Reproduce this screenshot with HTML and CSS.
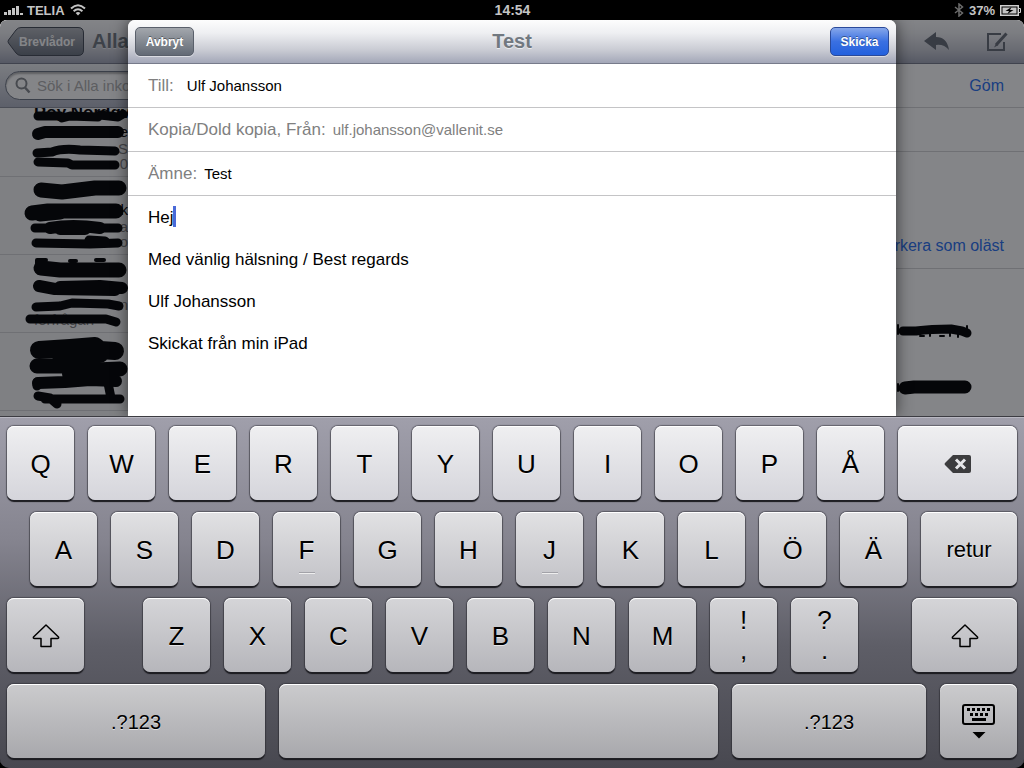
FILE: index.html
```html
<!DOCTYPE html>
<html lang="sv">
<head>
  <meta charset="UTF-8">
  <title>Test</title>
  <link rel="stylesheet" href="styles.css">
</head>
<body>

  <header class="status-bar">
    <div class="status-side">
      <svg width="20" height="10" viewBox="0 0 20 10" fill="#c4c4c4" aria-hidden="true">
        <rect x="0" y="7" width="3" height="3"/>
        <rect x="4" y="5" width="3" height="5"/>
        <rect x="8" y="3" width="3" height="7"/>
        <rect x="12" y="1" width="3" height="9"/>
        <rect x="16" y="8" width="3" height="2"/>
      </svg>
      <span>TELIA</span>
      <svg class="wifi" width="16" height="12" viewBox="0 0 16 12" fill="none" stroke="#c4c4c4" stroke-width="2" aria-hidden="true">
        <path d="M1 4.500Q8 -2 15 4.500"/>
        <path d="M3.600 7.200Q8 3.200 12.400 7.200"/>
        <path d="M8 11.500L5.600 9Q8 7.200 10.400 9Z" fill="#c4c4c4" stroke="none"/>
      </svg>
    </div>
    <time class="clock">14:54</time>
    <div class="status-side status-right">
      <svg width="10" height="14" viewBox="0 0 10 14" fill="none" stroke="#6c6c6c" stroke-width="1.500" aria-hidden="true">
        <path d="M1 4L8.500 10L5 13V1L8.500 4L1 10"/>
      </svg>
      <span>37%</span>
      <svg width="21" height="11" viewBox="0 0 21 11" aria-hidden="true">
        <rect x=".75" y=".75" width="17.500" height="9.500" fill="none" stroke="#d0d0d0" stroke-width="1.500"/>
        <rect x="2.500" y="2.500" width="14" height="6" fill="#c4c4c4"/>
        <path d="M19 3.500H20.500V7.500H19" fill="none" stroke="#d0d0d0"/>
        <path d="M11.500 2L5.500 6H9L7.500 9L13.500 5H10Z" fill="#000"/>
      </svg>
    </div>
  </header>

  <main class="stage">

    <div class="mail">
      <section class="sidebar">
        <div class="toolbar">
          <button class="back" type="button">
            <svg width="77" height="30" viewBox="0 0 77 30" aria-hidden="true">
              <defs>
                <linearGradient id="back-fill" x1="0" y1="0" x2="0" y2="1">
                  <stop offset="0" stop-color="#b3b6bc"/>
                  <stop offset="1" stop-color="#6c737f"/>
                </linearGradient>
              </defs>
              <path d="M14 .5H71Q76.500 .5 76.500 6V23Q76.500 28.500 71 28.500H14Q11 28.500 9 26L1.500 16Q.5 14.500 1.500 13L9 3Q11 .5 14 .5Z" fill="url(#back-fill)" stroke="#454b57"/>
            </svg>
            <span>Brevlådor</span>
          </button>
          <h2 class="title">Alla</h2>
        </div>
        <div class="search-bar">
          <label class="search">
            <svg width="16" height="17" viewBox="0 0 16 17" fill="none" stroke="#85888d" stroke-width="2" aria-hidden="true">
              <circle cx="6.500" cy="6.500" r="5"/>
              <path d="M10 10.500L14.500 15.500" stroke-width="2.500"/>
            </svg>
            <input type="search" placeholder="Sök i Alla inkorgar" aria-label="Sök">
          </label>
        </div>
        <div class="list">
          <ul>
            <li><b>Roy Nordqv</b><span class="tail">e</span><span class="tail preview">S</span><span class="tail preview">0</span></li>
            <li><b></b><span class="tail">k</span><span class="tail preview">a</span><span class="tail preview">o</span></li>
            <li><b></b><span class="tail"></span><span class="tail preview">n</span><span class="preview">förfrågan</span></li>
            <li></li>
          </ul>
          <svg class="marker" width="128" height="308" viewBox="0 0 128 308" aria-hidden="true">
            <g stroke-width="9">
              <path d="M38 8L60 8L62 10L70 8L98 9L100 7L118 9L123 6"/>
              <path d="M37 45L52 44Q62 40 80 42L115 43"/>
              <path d="M38 54L68 55L72 57L115 57"/>
              <path d="M35 120H118M36 135L90 136L118 135M89 132L105 133"/>
              <path d="M36 199L60 198L72 195L108 196L119 198"/>
              <path d="M30 211L106 211L116 214"/>
              <path d="M38 288L50 290L57 296M45 291H120M108 275L111 290M37 278V274"/>
            </g>
            <g stroke-width="12">
              <path d="M38 26L45 24L85 24L118 24"/>
              <path d="M50 120Q72 116 100 120M60 121H85"/>
              <path d="M39 178L55 181L115 182M60 179L100 178L122 180"/>
              <path d="M38 275L65 274L90 272L116 273M68 266H98"/>
            </g>
            <g stroke-width="15">
              <path d="M41 82L62 84L95 80L119 80"/>
              <path d="M32 105L48 103L116 103M40 106L60 104"/>
              <path d="M41 160L60 162L119 162"/>
              <path d="M37 258L70 258L95 262L120 261M66 252L72 268"/>
            </g>
            <path stroke-width="18" d="M39 242L70 240L95 238L100 242L115 243M60 246H100"/>
            <path stroke-width="4" d="M37 156V152H46M70 153H76M96 152H104"/>
          </svg>
        </div>
      </section>

      <section class="detail">
        <div class="toolbar">
          <button class="tool" type="button" aria-label="Svara">
            <svg width="26" height="20" viewBox="0 0 26 20" fill="#666c76" aria-hidden="true">
              <path d="M0 9L12 0V5Q23 5 25 18Q20 12 12 13V18Z"/>
            </svg>
          </button>
          <button class="tool" type="button" aria-label="Nytt brev">
            <svg width="22" height="20" viewBox="0 0 22 20" fill="none" stroke="#666c76" stroke-width="2" aria-hidden="true">
              <path d="M14 2H1V18H17V10"/>
              <path d="M19.500 1.500L9 13" stroke-width="3"/>
              <path d="M9.500 11L7 15.500L11.500 13Z" fill="#666c76" stroke="none"/>
            </svg>
          </button>
        </div>
        <div class="detail-row"><a href="#">Göm</a></div>
        <div class="detail-row"></div>
        <div class="detail-row detail-subject"><a href="#">Markera som oläst</a></div>
        <div class="message">
          <svg class="marker" width="128" height="148" viewBox="0 0 128 148" aria-hidden="true">
            <path stroke-width="9" d="M7 62L20 62Q35 60 55 60L66 62L71 64"/>
            <path stroke-width="13" d="M9 119L18 118L69 118"/>
            <path stroke-width="2" d="M2 56V65M2 115V122M24 67H28M34 63V67M44 67H48M54 63V67M62 64V68M71 57V62"/>
          </svg>
        </div>
      </section>
      <div class="dim"></div>
    </div>

    <form class="sheet">
      <div class="toolbar">
        <button class="btn" type="button">Avbryt</button>
        <h1 class="title">Test</h1>
        <button class="btn btn-send" type="submit">Skicka</button>
      </div>
      <div class="field">
        <label for="to">Till:</label>
        <input class="recipient" id="to" type="text" value="Ulf Johansson">
      </div>
      <div class="field">
        <label for="from">Kopia/Dold kopia, Från:</label>
        <input class="from" id="from" type="text" value="ulf.johansson@vallenit.se">
      </div>
      <div class="field">
        <label for="subject">Ämne:</label>
        <input id="subject" type="text" value="Test">
      </div>
      <div class="body">
        <textarea aria-label="Meddelande" spellcheck="false">Hej

Med vänlig hälsning / Best regards

Ulf Johansson

Skickat från min iPad</textarea>
        <span class="caret"></span>
      </div>
    </form>

  </main>

  <div class="keyboard">
    <div class="row row-1">
      <button type="button">Q</button>
      <button type="button">W</button>
      <button type="button">E</button>
      <button type="button">R</button>
      <button type="button">T</button>
      <button type="button">Y</button>
      <button type="button">U</button>
      <button type="button">I</button>
      <button type="button">O</button>
      <button type="button">P</button>
      <button type="button">Å</button>
      <button type="button" class="key-delete" aria-label="Radera">
        <svg width="28" height="18" viewBox="0 0 28 18" aria-hidden="true">
          <path d="M9 0H25Q27 0 27 2V16Q27 18 25 18H9L1 10Q0 9 1 8Z" fill="#3c3c3e"/>
          <path d="M12 4.500L21 13.500M21 4.500L12 13.500" stroke="#e6e6e9" stroke-width="3"/>
        </svg>
      </button>
    </div>
    <div class="row row-2">
      <button type="button">A</button>
      <button type="button">S</button>
      <button type="button">D</button>
      <button type="button" class="home">F</button>
      <button type="button">G</button>
      <button type="button">H</button>
      <button type="button" class="home">J</button>
      <button type="button">K</button>
      <button type="button">L</button>
      <button type="button">Ö</button>
      <button type="button">Ä</button>
      <button type="button" class="key-return">retur</button>
    </div>
    <div class="row row-3">
      <button type="button" class="shift-left" aria-label="Skift">
        <svg width="28" height="24" viewBox="0 0 28 24" fill="none" stroke="#000" stroke-width="1.500" stroke-linejoin="round" aria-hidden="true">
          <path d="M14 1L26.500 13Q27 14.500 25.500 14.500H19V22.500H9V14.500H2.500Q1 14.500 1.500 13Z"/>
        </svg>
      </button>
      <button type="button">Z</button>
      <button type="button">X</button>
      <button type="button">C</button>
      <button type="button">V</button>
      <button type="button">B</button>
      <button type="button">N</button>
      <button type="button">M</button>
      <button type="button" class="double"><span>!</span><span>,</span></button>
      <button type="button" class="double"><span>?</span><span>.</span></button>
      <button type="button" class="shift-right" aria-label="Skift">
        <svg width="28" height="24" viewBox="0 0 28 24" fill="none" stroke="#000" stroke-width="1.500" stroke-linejoin="round" aria-hidden="true">
          <path d="M14 1L26.500 13Q27 14.500 25.500 14.500H19V22.500H9V14.500H2.500Q1 14.500 1.500 13Z"/>
        </svg>
      </button>
    </div>
    <div class="row row-4">
      <button type="button" class="numbers-left">.?123</button>
      <button type="button" class="space" aria-label="Mellanslag"></button>
      <button type="button" class="numbers-right">.?123</button>
      <button type="button" class="hide" aria-label="Dölj tangentbord">
        <svg width="34" height="36" viewBox="0 0 34 36" aria-hidden="true">
          <rect x="1" y="1" width="31" height="19" rx="2" fill="none" stroke="#000" stroke-width="2"/>
          <path d="M5 5.500H29" stroke="#000" stroke-width="3" stroke-dasharray="3 2"/>
          <path d="M8 10.500H27" stroke="#000" stroke-width="3" stroke-dasharray="3 2"/>
          <path d="M10 15.500H24" stroke="#000" stroke-width="3"/>
          <path d="M10.500 28H23.500L17 34.500Z"/>
        </svg>
      </button>
    </div>
  </div>

</body>
</html>
```
FILE: styles.css
```css
* {
  box-sizing: border-box;
}

body {
  margin: 0;
  height: 100vh;
  display: flex;
  flex-direction: column;
  background-color: #000;
  color: #000;
  font-family: "Liberation Sans", Arial, sans-serif;
  overflow: hidden;
}

button, input, textarea {
  font-family: inherit;
  margin: 0;
}

button {
  cursor: pointer;
}

svg {
  display: block;
  flex: none;
}

/* Status bar */
.status-bar {
  height: 20px;
  padding: 0 3px 0 4px;
  display: flex;
  align-items: center;
  color: #c4c4c4;
  font-size: 13px;
  font-weight: bold;
}

.status-side {
  flex: 1;
  display: flex;
  align-items: center;
  gap: 3px;
}

.status-right {
  justify-content: flex-end;
  gap: 5px;
}

.wifi {
  margin-left: 2px;
}

.clock {
  font-size: 14px;
}

/* Mail app behind the sheet */
.stage {
  flex: 1;
  min-height: 0;
  position: relative;
}

.mail {
  height: 100%;
  display: flex;
  border-radius: 7px 7px 0 0;
  overflow: hidden;
  position: relative;
  background-color: #fff;
}

.dim {
  position: absolute;
  inset: 0;
  background-color: rgba(9, 12, 18, 0.5);
  pointer-events: none;
}

.toolbar {
  height: 44px;
  padding: 0 7px;
  display: flex;
  align-items: center;
  background: linear-gradient(#fdfdfd, #eeeff2 30%, #c9cbd3 70%, #a3a7b8);
  border-bottom: 1px solid #777b8b;
}

.title {
  margin: 0;
  font-size: 20px;
  color: #717880;
  text-shadow: 0 1px 0 rgba(255, 255, 255, 0.6);
}

.sidebar {
  width: 320px;
  flex: none;
  display: flex;
  flex-direction: column;
  background-color: #f4f4f5;
}

.sidebar .title {
  margin-left: 8px;
}

.back {
  position: relative;
  width: 77px;
  height: 30px;
  padding: 0 0 0 3px;
  border: none;
  background: none;
  color: #fff;
  font-size: 12px;
  font-weight: bold;
}

.back svg {
  position: absolute;
  left: 0;
  top: 0;
}

.back span {
  position: relative;
}

.search-bar {
  height: 44px;
  padding: 7px 5px;
  background: linear-gradient(#eceef1, #b0b4c3);
  border-bottom: 1px solid #8a8e9b;
}

.search {
  height: 29px;
  padding: 0 9px;
  display: flex;
  align-items: center;
  gap: 6px;
  background-color: #fff;
  border: 1px solid #6b7280;
  border-radius: 15px;
  box-shadow: inset 0 2px 2px rgba(0, 0, 0, 0.3);
}

.search input {
  flex: 1;
  min-width: 0;
  padding: 0;
  border: none;
  background: none;
  font-size: 15px;
}

.search input::placeholder {
  color: #b0b0b0;
}

.list {
  flex: 1;
  min-height: 0;
  overflow: hidden;
  position: relative;
}

.list ul {
  list-style: none;
  margin: -9px 0 0;
  padding: 0;
}

.list li {
  height: 78px;
  padding: 4px 192px 0 34px;
  border-bottom: 1px solid #d4d4d6;
  font-size: 15px;
  white-space: nowrap;
}

.list b {
  display: block;
  height: 20px;
  font-size: 17px;
  line-height: 20px;
}

.list span {
  display: block;
  height: 18px;
  line-height: 18px;
}

.list .tail {
  text-align: right;
}

.list .preview {
  height: 15px;
  line-height: 15px;
  color: #808080;
}

.marker {
  position: absolute;
  top: 0;
  left: 0;
  fill: none;
  stroke: #000;
  stroke-linecap: round;
  stroke-linejoin: round;
}

.detail {
  flex: 1;
  display: flex;
  flex-direction: column;
}

.detail .toolbar {
  justify-content: flex-end;
  gap: 37px;
  padding-right: 15px;
}

.tool {
  padding: 0;
  border: none;
  background: none;
}

.detail-row {
  height: 44px;
  padding: 0 20px;
  display: flex;
  align-items: center;
  justify-content: flex-end;
  border-bottom: 1px solid #d4d4d6;
  font-size: 16px;
}

.detail-row a {
  color: #2a70f0;
  text-decoration: none;
}

.detail-subject {
  height: 117px;
  align-items: flex-end;
  padding-bottom: 13px;
}

.message {
  flex: 1;
  min-height: 0;
  position: relative;
}

.message .marker {
  left: auto;
  right: 0;
}

/* Compose sheet */
.sheet {
  position: absolute;
  top: 0;
  bottom: 0;
  left: 12.5%;
  width: 75%;
  display: flex;
  flex-direction: column;
  background-color: #fff;
  border-radius: 7px 7px 0 0;
  box-shadow: 0 0 16px rgba(0, 0, 0, 0.6);
  clip-path: inset(0 -20px);
}

.sheet .toolbar {
  justify-content: space-between;
  border-radius: 7px 7px 0 0;
}

.btn {
  width: 59px;
  height: 29px;
  padding: 0;
  border: 1px solid #5a606b;
  border-radius: 5px;
  background: linear-gradient(#a3a7ad, #636a75);
  color: #fff;
  font-size: 12px;
  font-weight: bold;
  text-shadow: 0 -1px 0 rgba(0, 0, 0, 0.4);
  box-shadow: 0 1px 0 rgba(255, 255, 255, 0.5);
}

.btn-send {
  border-color: #2a4a9a;
  background: linear-gradient(#86a7ea, #3a70e2 50%, #2361dd);
}

.field {
  height: 44px;
  padding: 0 20px;
  display: flex;
  align-items: center;
  gap: 7px;
  border-bottom: 1px solid #c4c4c6;
}

.field label {
  color: #808080;
  font-size: 17px;
}

.field input {
  flex: 1;
  min-width: 0;
  padding: 0;
  border: none;
  outline: none;
  background: none;
  font-size: 15px;
}

.field .recipient {
  padding-left: 6px;
}

.field .from {
  color: #808080;
}

.body {
  flex: 1;
  min-height: 0;
  position: relative;
}

.body textarea {
  display: block;
  width: 100%;
  height: 100%;
  padding: 11px 20px;
  border: none;
  outline: none;
  resize: none;
  font-size: 17px;
  line-height: 21px;
}

.caret {
  position: absolute;
  top: 10px;
  left: 45px;
  width: 3px;
  height: 21px;
  background-color: #4a6ad8;
}

/* Keyboard */
.keyboard {
  padding: 9px 7px 10px;
  display: flex;
  flex-direction: column;
  gap: 12px;
  border-top: 1px solid #3c3c42;
  border-radius: 0 0 9px 9px;
  background: linear-gradient(#a09fab, #85848f 35%, #5e5e67 65%, #484850);
  box-shadow: inset 0 1px 0 #b9b8c2;
}

.row {
  display: flex;
  gap: 14px;
}

.row button {
  flex: 67 1 0;
  min-width: 0;
  height: 74px;
  padding: 2px 0 0;
  display: flex;
  align-items: center;
  justify-content: center;
  position: relative;
  border: none;
  border-radius: 7px;
  color: #000;
  font-size: 26px;
  text-shadow: 0 1px 0 rgba(255, 255, 255, 0.6);
  box-shadow: inset 0 1px 0 #fff, 0 0 1px 1px rgba(40, 40, 48, 0.5), 0 2px 1px #18181c;
}

.row-1 button {
  background: linear-gradient(#efeff1, #d5d5db);
}

.row-2 {
  padding-left: 23px;
}

.row-2 button {
  background: linear-gradient(#e1e1e3, #c2c2c7);
}

.row-3 button {
  background: linear-gradient(#d5d5d8, #b6b6bb);
}

.row-4 button {
  background: linear-gradient(#cbcbcd, #a8a8ac);
}

.home::after {
  content: "";
  position: absolute;
  bottom: 12px;
  width: 16px;
  height: 2px;
  background: linear-gradient(#a2a2a8 50%, #eee 50%);
}

.row .key-delete {
  flex-grow: 119;
}

.row .key-return {
  flex-grow: 96;
  font-size: 22px;
}

.row .shift-left {
  flex-grow: 77;
  margin-right: 45px;
}

.row .shift-right {
  flex-grow: 105;
  margin-left: 40px;
}

.row .double {
  flex-direction: column;
  padding: 0;
  line-height: 30px;
}

.row .numbers-left {
  flex-grow: 258;
  font-size: 20px;
}

.row .space {
  flex-grow: 439;
}

.row .numbers-right {
  flex-grow: 194;
  font-size: 20px;
}

.row .hide {
  flex-grow: 77;
}
```
